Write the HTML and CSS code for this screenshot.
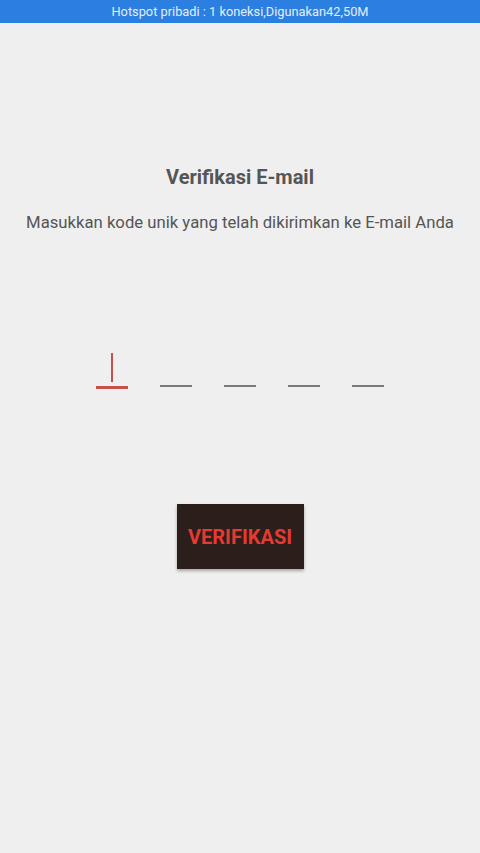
FILE: index.html
```html
<!DOCTYPE html>
<html>
<head>
<meta charset="utf-8">
<link rel="stylesheet" href="styles.css">
</head>
<body>
<div class="statusbar">Hotspot pribadi : 1 koneksi,Digunakan42,50M</div>
<main class="screen">
  <h1 class="title">Verifikasi E-mail</h1>
  <p class="subtitle">Masukkan kode unik yang telah dikirimkan ke E-mail Anda</p>
  <div class="code-row">
    <div class="cell active"><span class="cursor"></span></div>
    <div class="cell"></div>
    <div class="cell"></div>
    <div class="cell"></div>
    <div class="cell"></div>
  </div>
  <button class="verify">VERIFIKASI</button>
</main>
</body>
</html>
```
FILE: styles.css
```css
html, body {
  margin: 0;
  padding: 0;
  background: #efefef;
  font-family: Roboto, "Liberation Sans", sans-serif;
}
body {
  width: 480px;
  height: 853px;
  overflow: hidden;
}
.statusbar {
  height: 23px;
  background: #2b7fe0;
  color: #e4eefa;
  font-size: 12.8px;
  line-height: 23px;
  text-align: center;
}
.screen {
  display: flex;
  flex-direction: column;
  align-items: center;
}
.title {
  margin: 142px 0 0;
  font-size: 20px;
  line-height: 24px;
  font-weight: 700;
  color: #555555;
}
.subtitle {
  margin: 23px 0 0;
  font-size: 16.7px;
  line-height: 22px;
  color: #555555;
}
.code-row {
  margin-top: 119px;
  display: flex;
  align-items: flex-start;
  gap: 32px;
}
.cell {
  width: 32px;
  height: 32px;
  border-bottom: 2px solid #7a7a7a;
  display: flex;
  justify-content: center;
}
.cell.active {
  height: 33px;
  border-bottom: 3px solid #c9504a;
}
.cursor {
  width: 2px;
  height: 29px;
  background: #c9504a;
}
.verify {
  margin-top: 115px;
  width: 127px;
  height: 65px;
  border: none;
  background: #2b1e1b;
  color: #e53a30;
  font-family: Roboto, "Liberation Sans", sans-serif;
  font-weight: 700;
  font-size: 20px;
  padding: 0;
  box-shadow: 0 2px 3px rgba(0, 0, 0, 0.3);
}
```
